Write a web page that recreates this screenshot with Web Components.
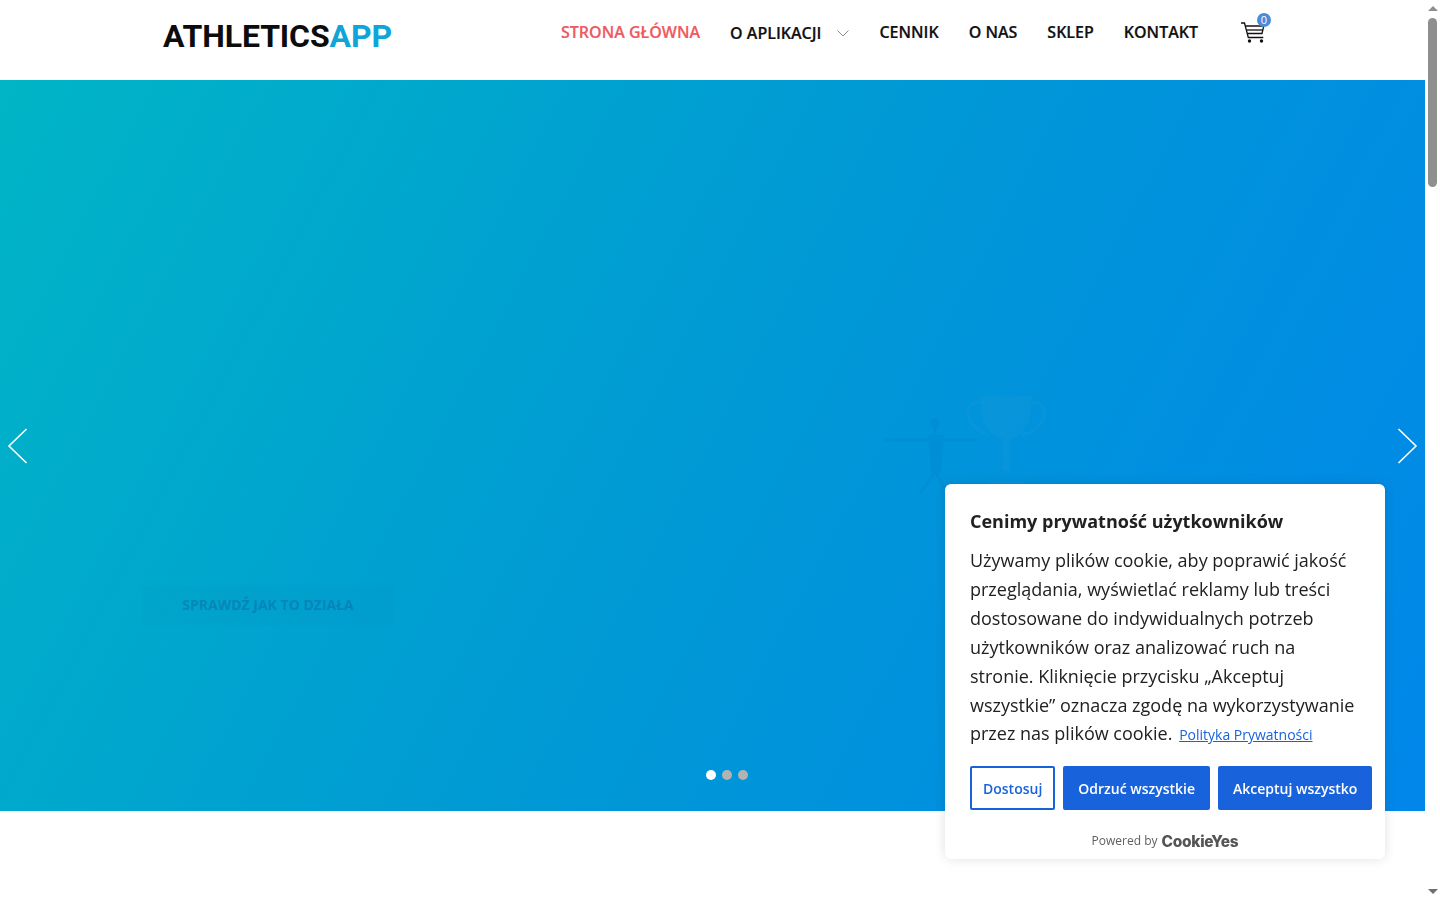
<!DOCTYPE html>
<html lang="pl">
<head>
<meta charset="utf-8">
<title>AthleticsApp</title>
<style>
    html, body { margin: 0; height: 100%; overflow: hidden; background: #fff; }
    body { font-family: "Open Sans", sans-serif; display: flex; height: 900px; }
    .page { flex: 1; min-width: 0; display: flex; flex-direction: column; }
</style>
</head>
<body>
<div class="page">
    <site-header></site-header>
    <hero-slider></hero-slider>
</div>
<fake-scrollbar></fake-scrollbar>
<cookie-notice></cookie-notice>

<script>
class SiteHeader extends HTMLElement {
    constructor() {
        super();
        this.attachShadow({ mode: 'open' });
    }

    connectedCallback() {
        this.shadowRoot.innerHTML = `
            <style>
                :host {
                    display: flex;
                    height: 80px;
                    flex: none;
                    background: #fff;
                    padding-left: 163px;
                    padding-right: 154px;
                    box-sizing: border-box;
                    justify-content: space-between;
                    align-items: flex-start;
                }
                .logo {
                    font-family: Roboto, sans-serif;
                    font-weight: 700;
                    font-size: 32px;
                    line-height: 36px;
                    margin-top: 18px;
                    letter-spacing: -0.1px;
                    color: #0c0c0c;
                    white-space: nowrap;
                }
                .logo span { color: #0fa5d6; }
                nav {
                    display: flex;
                    gap: 30px;
                    margin-top: 21px;
                    font-family: "Open Sans", sans-serif;
                    font-weight: 600;
                    font-size: 16px;
                    line-height: 22px;
                    color: #111;
                    white-space: nowrap;
                    -webkit-text-stroke: 0.2px currentColor;
                }
                nav a.active { color: #ef5a5f; }
                .has-sub { display: flex; align-items: center; gap: 16px; }
                .has-sub svg { display: block; margin-top: 1px; }
                .cart { position: relative; width: 32px; height: 32px; margin-left: 11px; margin-top: -9px; }
                .badge {
                    position: absolute;
                    left: 18px;
                    top: 1px;
                    width: 14px;
                    height: 14px;
                    border-radius: 50%;
                    background: #4a8cd8;
                    color: #fff;
                    font-size: 11px;
                    font-weight: 400;
                    line-height: 14px;
                    text-align: center;
                    -webkit-text-stroke: 0;
                }
            </style>
            <div class="logo">ATHLETICS<span>APP</span></div>
            <nav>
                <a class="active">STRONA GŁÓWNA</a>
                <a class="has-sub">O APLIKACJI
                    <svg width="12" height="7" viewBox="0 0 12 7" fill="none" stroke="#888" stroke-width="1"><path d="M.5.5 6 6l5.500-5.500"/></svg>
                </a>
                <a>CENNIK</a>
                <a>O NAS</a>
                <a>SKLEP</a>
                <a>KONTAKT</a>
                <div class="cart">
                    <svg width="32" height="32" viewBox="0 0 32 32" fill="none" stroke="#111" stroke-width="1.300">
                        <path d="M2 11h3.500l3.800 14.500h15"/>
                        <path d="M6.300 14h18.500l-1.800 7.500H8.300"/>
                        <path d="M8 18h16"/>
                        <circle cx="10.500" cy="29" r="1.700" fill="#111" stroke="none"/>
                        <circle cx="22.500" cy="29" r="1.700" fill="#111" stroke="none"/>
                    </svg>
                    <span class="badge">0</span>
                </div>
            </nav>
        `;
    }
}

class HeroSlider extends HTMLElement {
    constructor() {
        super();
        this.attachShadow({ mode: 'open' });
    }

    connectedCallback() {
        this.shadowRoot.innerHTML = `
            <style>
                :host {
                    display: block;
                    position: relative;
                    height: 731px;
                    flex: none;
                    overflow: hidden;
                    background: linear-gradient(118deg, #00b5c6 0%, #0099d5 50%, #0087ea 100%);
                }
                .arrow { position: absolute; top: 348px; }
                .arrow.prev { left: 7px; }
                .arrow.next { right: 7px; }
                .ghost { position: absolute; left: 880px; top: 305px; opacity: .09; }
                .cta {
                    position: absolute;
                    left: 143px;
                    top: 505px;
                    width: 250px;
                    height: 40px;
                    box-sizing: border-box;
                    text-align: center;
                    font: 700 14px/40px "Open Sans", sans-serif;
                    color: #0a6ea8;
                    background: rgba(10, 90, 150, .05);
                    opacity: .55;
                    white-space: nowrap;
                }
                .dots { position: absolute; left: 706px; top: 690px; display: flex; gap: 6px; }
                .dots i { width: 10px; height: 10px; border-radius: 50%; background: #b3b3b3; }
                .dots i.on { background: #fff; }
            </style>
            <svg class="ghost" width="175" height="110" viewBox="0 0 175 110" fill="none">
                <g stroke="#0a5f9c" stroke-width="3" stroke-linecap="round">
                    <path d="M5 55h90"/>
                    <path d="M55 42v45M55 87l-14 20M55 87l12 20"/>
                </g>
                <circle cx="55" cy="38" r="5" fill="#0a5f9c"/>
                <path d="M48 50h16l-3 38H51z" fill="#0a5f9c"/>
                <g stroke="#5aa5c8" stroke-width="3">
                    <path d="M102 12h48c0 26-8 40-24 40s-24-14-24-40z" fill="#5aa5c8"/>
                    <path d="M102 18c-22-4-18 26 8 32M150 18c22-4 18 26-8 32"/>
                    <path d="M126 52v34M108 100h36" stroke-width="8"/>
                </g>
            </svg>
            <div class="cta">SPRAWDŹ JAK TO DZIAŁA</div>
            <svg class="arrow prev" width="22" height="36" viewBox="0 0 22 36" fill="none" stroke="#fff" stroke-width="1.600"><path d="M19.500 1 2 18l17.500 17"/></svg>
            <svg class="arrow next" width="22" height="36" viewBox="0 0 22 36" fill="none" stroke="#fff" stroke-width="1.600"><path d="M2.500 1 20 18 2.500 35"/></svg>
            <div class="dots"><i class="on"></i><i></i><i></i></div>
        `;
    }
}

class CookieNotice extends HTMLElement {
    constructor() {
        super();
        this.attachShadow({ mode: 'open' });
    }

    connectedCallback() {
        this.shadowRoot.innerHTML = `
            <style>
                :host {
                    display: block;
                    position: fixed;
                    left: 945px;
                    top: 484px;
                    width: 440px;
                    height: 375px;
                    box-sizing: border-box;
                    padding: 22px 25px 0;
                    background: #fff;
                    border-radius: 6px;
                    box-shadow: 0 0 12px rgba(0, 0, 0, .12);
                    font-family: "Open Sans", sans-serif;
                    color: #212121;
                }
                h2 { margin: 0 0 10px; font-size: 18px; line-height: 30px; font-weight: 700; }
                p { margin: 0; font-size: 18px; line-height: 28.900px; }
                p a { font-size: 14px; color: #1863dc; text-decoration: underline; margin-left: 2px; }
                .buttons { display: flex; gap: 8px; margin-top: 16px; }
                button {
                    height: 44px;
                    box-sizing: border-box;
                    padding: 0 13px;
                    border: 2px solid #1863dc;
                    border-radius: 2px;
                    background: #1863dc;
                    color: #fff;
                    font: 600 14px "Open Sans", sans-serif;
                    white-space: nowrap;
                }
                button.plain { background: #fff; color: #1863dc; padding: 0 11px; }
                .powered {
                    display: flex;
                    justify-content: center;
                    align-items: center;
                    gap: 4px;
                    margin-top: 18px;
                    font-size: 12px;
                    line-height: 24px;
                    color: #5f5f5f;
                    padding-right: 0;
                }
                .brand { font: 800 15.500px/24px Inter, sans-serif; letter-spacing: -0.3px; color: #555; margin-top: 2px; }
            </style>
            <h2>Cenimy prywatność użytkowników</h2>
            <p>Używamy plików cookie, aby poprawić jakość przeglądania, wyświetlać reklamy lub treści dostosowane do indywidualnych potrzeb użytkowników oraz analizować ruch na stronie. Kliknięcie przycisku „Akceptuj wszystkie” oznacza zgodę na wykorzystywanie przez nas plików cookie. <a>Polityka Prywatności</a></p>
            <div class="buttons">
                <button class="plain">Dostosuj</button>
                <button>Odrzuć wszystkie</button>
                <button>Akceptuj wszystko</button>
            </div>
            <div class="powered">Powered by <span class="brand">CookieYes</span></div>
        `;
    }
}

class FakeScrollbar extends HTMLElement {
    constructor() {
        super();
        this.attachShadow({ mode: 'open' });
    }

    connectedCallback() {
        this.shadowRoot.innerHTML = `
            <style>
                :host {
                    display: flex;
                    flex-direction: column;
                    align-items: center;
                    flex: none;
                    width: 15px;
                    height: 900px;
                    background: #fff;
                }
                .up, .down { width: 0; height: 0; border-left: 5px solid transparent; border-right: 5px solid transparent; }
                .up { border-bottom: 5px solid #8f8f8f; margin-top: 6px; }
                .down { border-top: 5px solid #6f6f6f; margin-top: auto; margin-bottom: 6px; }
                .thumb { width: 9px; height: 169px; margin-top: 7px; border-radius: 5px; background: #8f8f8f; }
            </style>
            <div class="up"></div>
            <div class="thumb"></div>
            <div class="down"></div>
        `;
    }
}

customElements.define('site-header', SiteHeader);
customElements.define('hero-slider', HeroSlider);
customElements.define('cookie-notice', CookieNotice);
customElements.define('fake-scrollbar', FakeScrollbar);
</script>
</body>
</html>
